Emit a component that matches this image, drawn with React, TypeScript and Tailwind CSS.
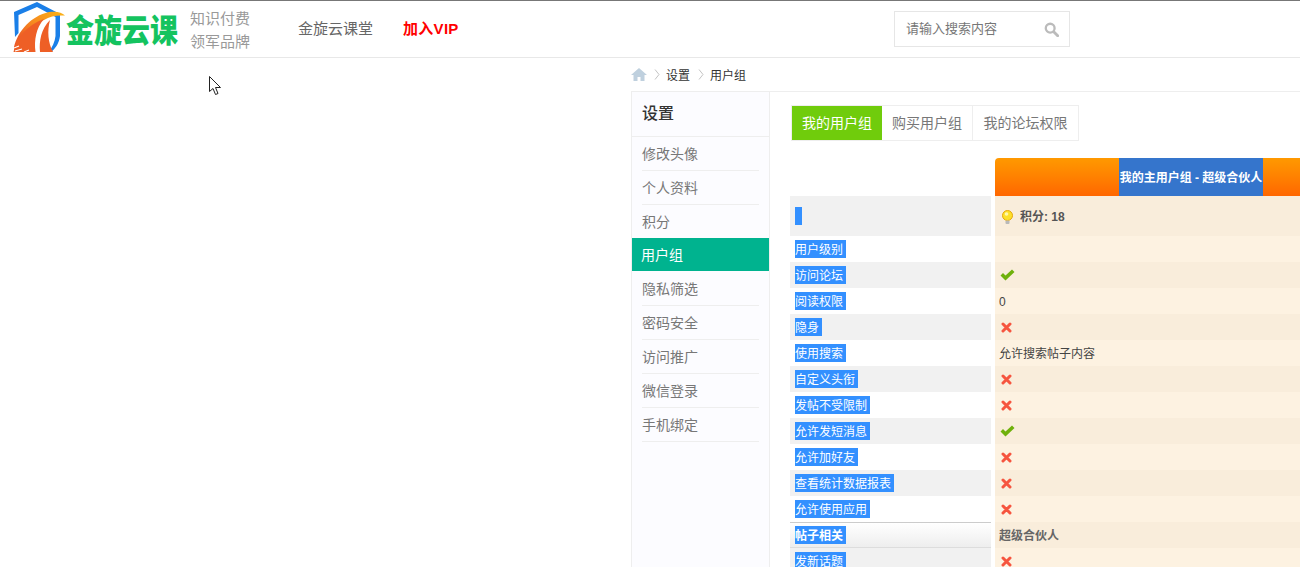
import React from "react";

function Logo() {
  return (
    <svg width="54" height="52" viewBox="0 0 54 52" className="block shrink-0">
      <defs>
        <linearGradient id="wing" x1="1" y1="0" x2="0" y2="1">
          <stop offset="0" stopColor="#fbb416" />
          <stop offset="0.45" stopColor="#f68a20" />
          <stop offset="0.75" stopColor="#ee5f26" />
          <stop offset="1" stopColor="#ec5527" />
        </linearGradient>
      </defs>
      <path d="M1 11 L24 1 L47 13 L47 35 C46 42 43 47 38 51 L36 51 C39 46 42 41 42.500 35 L42.500 16 L24 6 L5.500 14 L5.500 32 L2 36 Z" fill="#1a7fe8" />
      <path d="M1 46 C5 30 18 15 36 11 C43 10 49 11 52 14.500 C44 14 37 15 31 19 C17 24 5 35 1 51 Z" fill="url(#wing)" />
      <path d="M0.500 51 C3 37 14 24 31 18 C23 27 21 39 22.500 51 Z" fill="#ee5f26" />
      <path d="M27 51 C26 40 28 28 37 19 C34 30 35 42 40 51 Z" fill="#ee5f26" />
      <path d="M1 47 L6 45 M2 50 L9 48 M11 51 L16 49" stroke="#fff" strokeWidth="1.200" />
    </svg>
  );
}

function Check() {
  return (
    <svg width="15" height="12" viewBox="0 0 15 12" className="ml-[1px] block">
      <path d="M0.5 6.5 L3 4 L5.5 6.5 L12 0.5 L14.5 3 L5.5 11.5 Z" fill="#6fb10c" />
    </svg>
  );
}

function Cross() {
  return (
    <svg width="11" height="11" viewBox="0 0 11 11" className="ml-[2px] block">
      <path d="M2 2 L9 9 M9 2 L2 9" stroke="#f6553f" strokeWidth="3" strokeLinecap="round" />
    </svg>
  );
}

function Bulb() {
  return (
    <svg width="13" height="15" viewBox="0 0 13 15" className="mt-[2px] block">
      <circle cx="6.5" cy="5.5" r="5" fill="#fde02a" stroke="#e6a70c" />
      <circle cx="5.5" cy="4" r="1.800" fill="#fff8b0" />
      <rect x="4.500" y="10.500" width="4" height="3.500" rx="1" fill="#b9b9b9" />
    </svg>
  );
}

function Home() {
  return (
    <svg width="16" height="13" viewBox="0 0 16 13" className="block">
      <path d="M8 0 L16 7 L13.5 7 L13.5 13 L9.5 13 L9.5 9 L6.5 9 L6.5 13 L2.5 13 L2.5 7 L0 7 Z" fill="#bfd0de" />
    </svg>
  );
}

function Sep() {
  return (
    <svg width="6" height="11" viewBox="0 0 6 11" className="block">
      <path d="M1 0.5 L5 5.5 L1 10.5" fill="none" stroke="#c4c4c4" />
    </svg>
  );
}

function Cursor() {
  return (
    <svg width="13" height="20" viewBox="0 0 13 20" className="absolute left-[209px] top-[76px]">
      <path d="M0.5 0.5 L0.5 15.5 L4 12.5 L6.5 18.5 L9 17.5 L6.5 11.5 L11.5 11.5 Z" fill="#fff" stroke="#222" strokeWidth="1" />
    </svg>
  );
}

type Row = { label: string; value: React.ReactNode };
const X = <Cross />;
const V = <Check />;
const rows: Row[] = [
  { label: "用户级别", value: null },
  { label: "访问论坛", value: V },
  { label: "阅读权限", value: <span className="mt-[2px]">0</span> },
  { label: "隐身", value: X },
  { label: "使用搜索", value: <span className="mt-[2px]">允许搜索帖子内容</span> },
  { label: "自定义头衔", value: X },
  { label: "发帖不受限制", value: X },
  { label: "允许发短消息", value: V },
  { label: "允许加好友", value: X },
  { label: "查看统计数据报表", value: X },
  { label: "允许使用应用", value: X },
];

export default function App() {
  return (
    <div className="relative h-[567px] w-[1300px] overflow-hidden bg-white font-['Liberation_Sans','Noto_Sans_CJK_SC',sans-serif] text-[13px] text-[#444]">
      <header className="flex h-[58px] items-center border-t border-b border-t-[#777] border-b-[#e8e8e8]">
        <div className="ml-[13px] flex h-[52px] w-[166px] shrink-0 items-center self-start">
          <Logo />
          <span className="ml-[-1px] mt-[2px] origin-center scale-y-[1.15] font-['Noto_Sans_CJK_SC',sans-serif] text-[28px] leading-[32px] font-black whitespace-nowrap text-[#14c35f]">金旋云课</span>
        </div>
        <div className="mt-[1px] ml-[11px] flex w-[60px] shrink-0 flex-col text-[15px] leading-[23px] text-[#999]">
          <span>知识付费</span>
          <span>领军品牌</span>
        </div>
        <a className="mt-[1px] ml-[48px] w-[76px] shrink-0 text-[15px] whitespace-nowrap text-[#666]">金旋云课堂</a>
        <a className="mt-[1px] ml-[29px] w-[57px] shrink-0 text-[15px] font-bold tracking-[0.3px] whitespace-nowrap text-[#f00]">加入VIP</a>
        <div className="ml-[434px] flex h-[36px] w-[176px] shrink-0 items-center justify-between border border-[#e6e6e6] pr-[10px] pl-[11px]">
          <span className="text-[13px] text-[#777]">请输入搜索内容</span>
          <svg width="15" height="15" viewBox="0 0 17 17" className="block">
            <circle cx="7" cy="7" r="5" fill="none" stroke="#bbb" strokeWidth="2.6" />
            <path d="M11 11 L15.5 15.5" stroke="#bbb" strokeWidth="3.200" strokeLinecap="round" />
          </svg>
        </div>
      </header>

      <div className="ml-[631px] w-[669px]">
        <nav className="flex h-[33px] items-center text-[12px] text-[#333]">
          <Home />
          <span className="ml-[7px]"><Sep /></span>
          <span className="mt-[2px] ml-[6px]">设置</span>
          <span className="ml-[8px]"><Sep /></span>
          <span className="mt-[2px] ml-[6px]">用户组</span>
        </nav>

        <div className="flex border-t border-[#eee]">
          <aside className="h-[600px] w-[139px] shrink-0 border-r border-l border-[#eee] bg-[#fcfcff]">
            <h2 className="h-[45px] border-b border-[#eee] pl-[10px] text-[16px] leading-[44px] font-medium text-[#333]">设置</h2>
            <ul className="text-[14px] text-[#777]">
              <li className="mx-[10px] h-[34px] border-b border-[#eee] leading-[34px]">修改头像</li>
              <li className="mx-[10px] h-[34px] border-b border-[#eee] leading-[34px]">个人资料</li>
              <li className="mx-[10px] h-[33px] leading-[34px]">积分</li>
              <li className="h-[33px] bg-[#00b38f] pl-[9px] leading-[35px] text-white">用户组</li>
              <li className="mx-[10px] h-[35px] border-b border-[#eee] leading-[36px]">隐私筛选</li>
              <li className="mx-[10px] h-[34px] border-b border-[#eee] leading-[34px]">密码安全</li>
              <li className="mx-[10px] h-[34px] border-b border-[#eee] leading-[34px]">访问推广</li>
              <li className="mx-[10px] h-[34px] border-b border-[#eee] leading-[34px]">微信登录</li>
              <li className="mx-[10px] h-[34px] border-b border-[#eee] leading-[34px]">手机绑定</li>
            </ul>
          </aside>

          <main className="min-w-0 flex-1 pl-[20px]">
            <div className="mt-[13px] ml-[1px] flex h-[36px] w-fit border border-[#eee] text-[14px] text-[#777]">
              <span className="w-[90px] bg-[#70cc0c] text-center leading-[34px] text-white">我的用户组</span>
              <span className="w-[91px] border-r border-[#eee] text-center leading-[34px]">购买用户组</span>
              <span className="w-[105px] text-center leading-[34px]">我的论坛权限</span>
            </div>

            <div className="mt-[17px] w-[597px] text-[12px]">
              <div className="ml-[205px] flex h-[38px] items-stretch justify-center rounded-tl-[4px] bg-gradient-to-b from-[#ff9900] to-[#ff6600]">
                <span className="bg-[#3575cc] px-[1px] text-[12px] leading-[40px] font-bold whitespace-nowrap text-white">我的主用户组 - 超级合伙人</span>
              </div>

              <div className="flex h-[40px]">
                <div className="flex w-[201px] items-center bg-[#f1f1f1] pl-[5px]">
                  <span className="h-[18px] w-[7px] bg-[#3390ff]" />
                </div>
                <div className="ml-[4px] flex flex-1 items-center gap-[6px] bg-[#f9eddb] pl-[6px] font-bold text-[#555]">
                  <Bulb />
                  <span className="mt-[2px]">积分: 18</span>
                </div>
              </div>

              {rows.map((r, i) => (
                <div key={r.label} className="flex h-[26px]">
                  <div className={`flex w-[201px] items-center pl-[5px] ${i % 2 === 1 ? "bg-[#f1f1f1]" : "bg-white"}`}>
                    <span className="h-[18px] bg-[#3390ff] pr-[3px] leading-[20px] whitespace-nowrap text-white">{r.label}</span>
                  </div>
                  <div className={`ml-[4px] flex flex-1 items-center pl-[4px] text-[#444] ${i % 2 === 1 ? "bg-[#f9eddb]" : "bg-[#fdf2e1]"}`}>
                    {r.value}
                  </div>
                </div>
              ))}

              <div className="flex h-[26px]">
                <div className="flex w-[201px] items-center border-t border-b border-t-[#ccc] border-b-[#ddd] bg-gradient-to-b from-white to-[#eeeeee] pl-[5px]">
                  <span className="h-[18px] bg-[#3390ff] pr-[3px] leading-[20px] font-bold whitespace-nowrap text-white">帖子相关</span>
                </div>
                <div className="ml-[4px] flex flex-1 items-center bg-[#f9eddb] pl-[4px] font-bold text-[#666]"><span className="mt-[2px]">超级合伙人</span></div>
              </div>

              <div className="flex h-[26px]">
                <div className="flex w-[201px] items-center bg-[#f1f1f1] pl-[5px]">
                  <span className="h-[18px] bg-[#3390ff] pr-[3px] leading-[20px] whitespace-nowrap text-white">发新话题</span>
                </div>
                <div className="ml-[4px] flex flex-1 items-center bg-[#fdf2e1] pl-[4px]"><Cross /></div>
              </div>
            </div>
          </main>
        </div>
      </div>

      <Cursor />
    </div>
  );
}
